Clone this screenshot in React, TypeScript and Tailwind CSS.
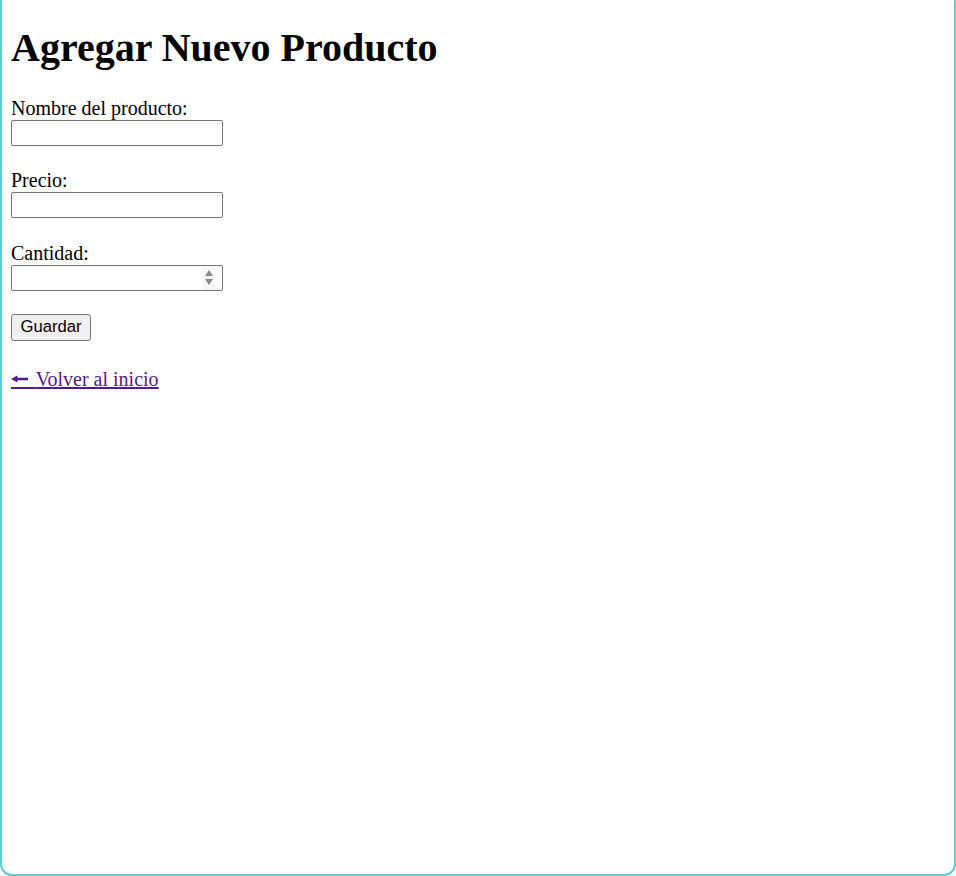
import React from "react";

function Field({ label, spinner }: { label: string; spinner?: boolean }) {
  return (
    <div className="flex flex-col items-start">
      <label className="block h-[23px] text-[20px] leading-[23px] text-black">{label}</label>
      <div className="relative h-[26px] w-[212px]">
        <input
          type="text"
          className="block h-[26px] w-[212px] rounded-[2px] border border-[#767676] bg-white px-[3px] text-[16.67px] outline-none"
          style={{ fontFamily: '"Liberation Sans", Arial, sans-serif' }}
        />
        {spinner && (
          <div className="absolute right-[8px] top-[1px] flex h-[24px] w-[12px] flex-col items-center justify-center gap-[3px] bg-[#f6f6f6]">
            <svg width="8" height="6" viewBox="0 0 8 6">
              <polygon points="4,0 8,6 0,6" fill="#8a8a8a" />
            </svg>
            <svg width="8" height="6" viewBox="0 0 8 6">
              <polygon points="0,0 8,0 4,6" fill="#8a8a8a" />
            </svg>
          </div>
        )}
      </div>
    </div>
  );
}

export default function App() {
  return (
    <div className="h-[876px] w-[956px] overflow-hidden bg-white">
      <div
        className="-mt-[10px] h-[886px] w-[956px] rounded-[12px] border-2 border-[#5fcdcd] bg-white pl-[9px] pt-[32.7px]"
        style={{ fontFamily: '"Liberation Serif", "Times New Roman", serif' }}
      >
        <h1 className="m-0 text-[40px] font-bold leading-[46px] text-black">Agregar Nuevo Producto</h1>
        <div className="mt-[26.3px] flex flex-col gap-[23.3px]">
          <Field label="Nombre del producto:" />
          <Field label="Precio:" />
          <Field label="Cantidad:" spinner />
          <div>
            <button
              className="h-[27px] w-[80px] rounded-[3px] border border-[#767676] bg-[#efefef] text-[16.67px] leading-[20px] text-black"
              style={{ fontFamily: '"Liberation Sans", Arial, sans-serif' }}
            >
              Guardar
            </button>
          </div>
        </div>
        <div className="mt-[27.5px]">
          <a href="#" className="text-[20px] leading-[23px] text-[#551a8b] underline">
            <span className="relative text-transparent">
              ←
              <svg
                className="absolute left-0 top-[7px]"
                width="17"
                height="8"
                viewBox="0 0 17 8"
              >
                <path d="M0 4 L6.5 0.5 L6.5 2.8 L17 2.8 L17 5.2 L6.5 5.2 L6.5 7.5 Z" fill="#551a8b" />
              </svg>
            </span>{" "}
            Volver al inicio
          </a>
        </div>
      </div>
    </div>
  );
}
